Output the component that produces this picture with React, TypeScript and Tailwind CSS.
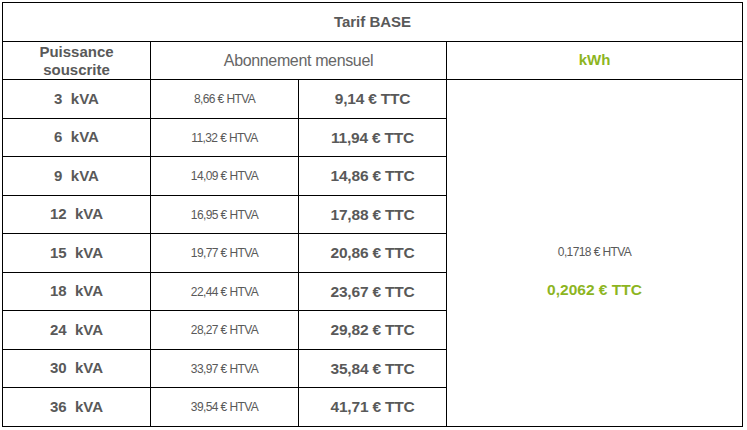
import React from "react";

const rows = [
  ["3", "8,66", "9,14"],
  ["6", "11,32", "11,94"],
  ["9", "14,09", "14,86"],
  ["12", "16,95", "17,88"],
  ["15", "19,77", "20,86"],
  ["18", "22,44", "23,67"],
  ["24", "28,27", "29,82"],
  ["30", "33,97", "35,84"],
  ["36", "39,54", "41,71"],
];

const heights = ["h-[39px]", "h-[38px]"];

export default function App() {
  return (
    <div className="w-[747px] h-[430px] bg-white pl-[2px] pt-[2px]" style={{ fontFamily: '"Liberation Sans", Arial, sans-serif' }}>
      <div className="w-[741px] border-l border-t border-black text-[#595959]">
        <div className="h-[39px] border-r border-b border-black flex items-center justify-center font-bold text-[15px]">
          Tarif BASE
        </div>
        <div className="flex h-[38px]">
          <div className="w-[148px] border-r border-b border-black flex items-center justify-center text-center font-bold text-[15px] leading-[18px]">
            Puissance
            <br />
            souscrite
          </div>
          <div className="w-[296px] border-r border-b border-black flex items-center justify-center text-[16px] tracking-[-0.35px] text-[#666]">
            Abonnement mensuel
          </div>
          <div className="w-[296px] border-r border-b border-black flex items-center justify-center font-bold text-[15px] text-[#8db51f]">
            kWh
          </div>
        </div>
        <div className="flex">
          <div className="flex flex-col">
            {rows.map((r, i) => (
              <div key={r[0]} className={`flex ${i % 2 === 0 ? heights[0] : heights[1]}`}>
                <div className="w-[148px] border-r border-b border-black flex items-center justify-center font-bold text-[15px] whitespace-pre">
                  {r[0]}{"\u00a0\u00a0"}kVA
                </div>
                <div className="w-[148px] border-r border-b border-black flex items-center justify-center text-[12px] tracking-[-0.6px]">
                  {r[1]} € HTVA
                </div>
                <div className="w-[148px] border-r border-b border-black flex items-center justify-center font-bold text-[15.5px] tracking-[-0.2px]">
                  {r[2]} € TTC
                </div>
              </div>
            ))}
          </div>
          <div className="w-[296px] border-r border-b border-black flex flex-col items-center justify-center pt-[38px] gap-[22px]">
            <div className="text-[12px] tracking-[-0.6px] leading-[14px]">0,1718 € HTVA</div>
            <div className="font-bold text-[15.5px] leading-[18px] text-[#8db51f]">0,2062 € TTC</div>
          </div>
        </div>
      </div>
    </div>
  );
}
